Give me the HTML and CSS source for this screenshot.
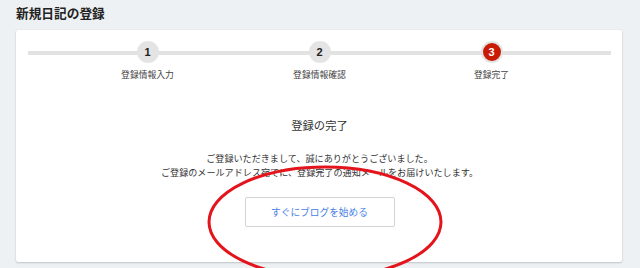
FILE: index.html
```html
<!DOCTYPE html>
<html lang="ja">
<head>
<meta charset="utf-8">
<title>新規日記の登録</title>
<link rel="stylesheet" href="styles.css">
</head>
<body>
<div class="page">
  <h1 class="page-title">新規日記の登録</h1>
  <div class="card">
    <div class="steps">
      <div class="step">
        <div class="step-num">1</div>
        <div class="step-label">登録情報入力</div>
      </div>
      <div class="step">
        <div class="step-num">2</div>
        <div class="step-label">登録情報確認</div>
      </div>
      <div class="step">
        <div class="step-num step-num-active">3</div>
        <div class="step-label">登録完了</div>
      </div>
    </div>
    <h2 class="done-title">登録の完了</h2>
    <p class="done-msg">ご登録いただきまして、誠にありがとうございました。<br>ご登録のメールアドレス宛てに、登録完了の通知メールをお届けいたします。</p>
    <div class="actions">
      <a class="start-btn" href="#">すぐにブログを始める</a>
    </div>
  </div>
  <svg class="annotation" width="640" height="268" viewBox="0 0 640 268">
    <ellipse cx="325" cy="222" rx="116" ry="55" fill="none" stroke="#e3141c" stroke-width="3"/>
  </svg>
</div>
</body>
</html>
```
FILE: styles.css
```css
* { box-sizing: border-box; }
html, body {
  margin: 0;
  padding: 0;
  background: #eef1f4;
}
body {
  font-family: "Noto Sans CJK JP", "Noto Sans", sans-serif;
  color: #333;
  width: 640px;
  height: 268px;
  overflow: hidden;
}
.page {
  position: relative;
  height: 268px;
}
.page-title {
  margin: 0;
  padding: 4px 16px 8px;
  font-size: 12.7px;
  line-height: 18px;
  font-weight: bold;
  color: #222;
}
.card {
  margin: 0 18px 0 16px;
  height: 232px;
  background: #fff;
  border-radius: 2px;
  box-shadow: 0 1px 2px rgba(0,0,0,0.18), 0 0 1px rgba(0,0,0,0.12);
  padding: 11px 11px 0 12px;
}
.steps {
  display: flex;
  justify-content: center;
  background: linear-gradient(#e2e2e2, #e2e2e2) no-repeat 0 10px / 100% 4px;
  border-radius: 2px;
}
.step {
  width: 172px;
  display: flex;
  flex-direction: column;
  align-items: center;
}
.step-num {
  width: 22px;
  height: 22px;
  border-radius: 50%;
  background: #e4e4e4;
  border: 2px solid #e4e4e4;
  display: flex;
  align-items: center;
  justify-content: center;
  font-family: "Liberation Sans", "Noto Sans", sans-serif;
  font-weight: bold;
  font-size: 11px;
  color: #222;
}
.step-num-active {
  background: #c91a06;
  color: #fff;
}
.step-label {
  margin-top: 6px;
  font-size: 8.8px;
  line-height: 12px;
  color: #444;
  white-space: nowrap;
}
.done-title {
  margin: 36px 0 0;
  text-align: center;
  font-size: 11.3px;
  line-height: 16px;
  font-weight: normal;
  color: #333;
}
.done-msg {
  margin: 18px 0 0;
  text-align: center;
  font-size: 9.1px;
  line-height: 14px;
  color: #333;
  white-space: nowrap;
}
.actions {
  margin-top: 18px;
  display: flex;
  justify-content: center;
}
.start-btn {
  width: 150px;
  height: 30px;
  border: 1px solid #d3d3d3;
  border-radius: 2px;
  display: flex;
  align-items: center;
  justify-content: center;
  font-size: 9.7px;
  color: #4a82e6;
  text-decoration: none;
  background: #fff;
}
.annotation {
  position: absolute;
  left: 0;
  top: 0;
  pointer-events: none;
}
```
